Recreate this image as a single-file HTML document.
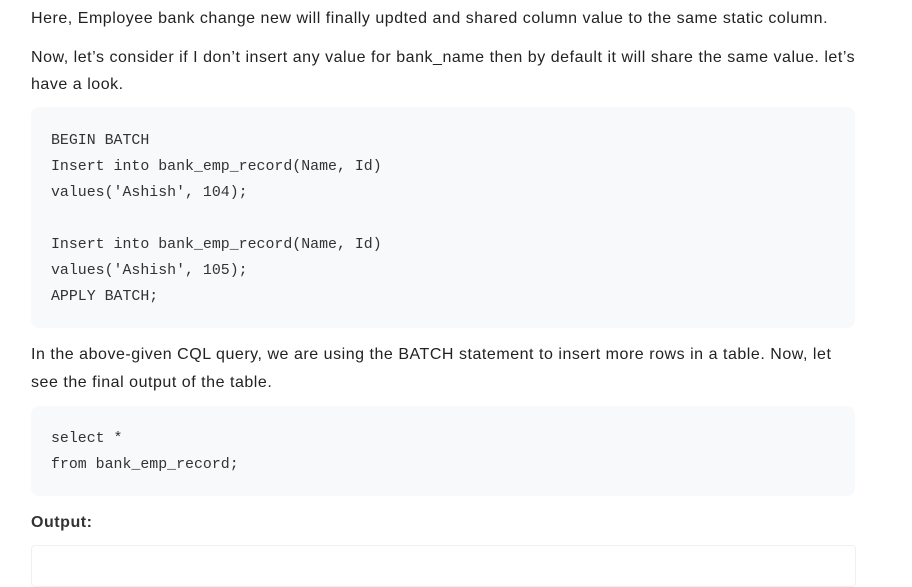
<!DOCTYPE html>
<html><head><meta charset="utf-8"><style>
body{margin:0;width:912px;height:567px;background:#fff;position:relative;overflow:hidden;font-family:"Liberation Sans",sans-serif;color:#222;}
.t{position:absolute;left:31px;font-size:16px;white-space:nowrap;line-height:20px;letter-spacing:0.53px;}
.c{position:absolute;left:31px;width:824px;background:#f8f9fa;border-radius:8px;}
.m{position:absolute;left:51px;font-family:"Liberation Mono",monospace;font-size:14.9px;line-height:20px;white-space:pre;color:#333;}
</style></head><body>
<div class="t" style="top:9px">Here, Employee bank change new will finally updted and shared column value to the same static column.</div>
<div class="t" style="top:48px">Now, let’s consider if I don’t insert any value for bank_name then by default it will share the same value. let’s</div>
<div class="t" style="top:75px">have a look.</div>
<div class="c" style="top:107px;height:221px"></div>
<div class="m" style="top:131px">BEGIN BATCH</div>
<div class="m" style="top:157px">Insert into bank_emp_record(Name, Id)</div>
<div class="m" style="top:183px">values('Ashish', 104);</div>
<div class="m" style="top:235px">Insert into bank_emp_record(Name, Id)</div>
<div class="m" style="top:261px">values('Ashish', 105);</div>
<div class="m" style="top:287px">APPLY BATCH;</div>
<div class="t" style="top:345px">In the above-given CQL query, we are using the BATCH statement to insert more rows in a table. Now, let</div>
<div class="t" style="top:373px">see the final output of the table.</div>
<div class="c" style="top:406px;height:90px"></div>
<div class="m" style="top:429px">select *</div>
<div class="m" style="top:455px">from bank_emp_record;</div>
<div class="t" style="top:513px;font-weight:bold;color:#333">Output:</div>
<div style="position:absolute;left:31px;top:545px;width:823px;height:40px;border:1px solid #f0f0f0;border-radius:4px"></div>
</body></html>
